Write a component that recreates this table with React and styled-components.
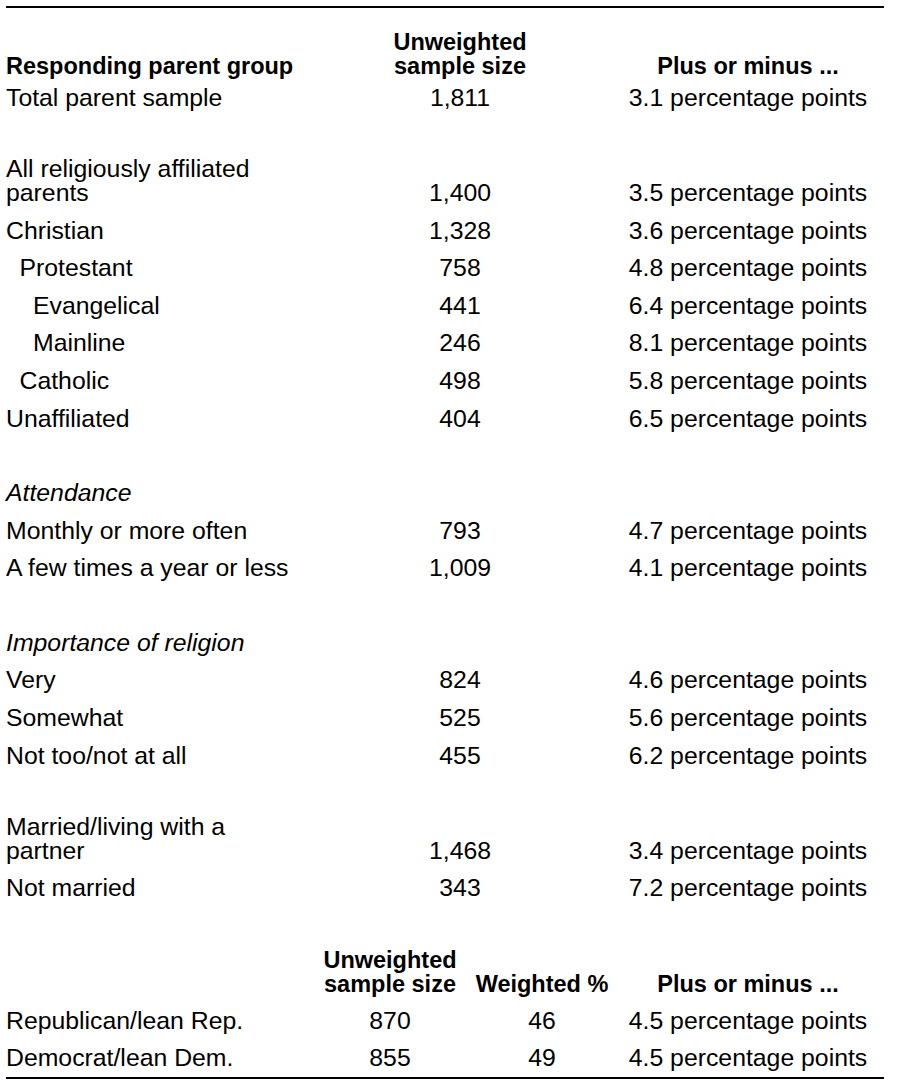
import React from 'react';
import styled, { createGlobalStyle } from 'styled-components';

const GlobalStyle = createGlobalStyle`
  body {
    margin: 0;
    background: #fff;
    color: #000;
    font-family: 'Liberation Sans', Arial, sans-serif;
  }
`;

const TOP_COLS = '384px 140px 1fr';
const BOTTOM_COLS = '314px 140px 152px 1fr';

const groups = [
  {
    gap: 0,
    rows: [{ label: 'Total parent sample', n: '1,811', moe: '3.1' }],
  },
  {
    gap: 33.4,
    rows: [
      { label: 'All religiously affiliated\nparents', n: '1,400', moe: '3.5' },
      { label: 'Christian', n: '1,328', moe: '3.6' },
      { label: 'Protestant', n: '758', moe: '4.8', indent: 1 },
      { label: 'Evangelical', n: '441', moe: '6.4', indent: 2 },
      { label: 'Mainline', n: '246', moe: '8.1', indent: 2 },
      { label: 'Catholic', n: '498', moe: '5.8', indent: 1 },
      { label: 'Unaffiliated', n: '404', moe: '6.5' },
    ],
  },
  {
    gap: 36.8,
    title: 'Attendance',
    rows: [
      { label: 'Monthly or more often', n: '793', moe: '4.7' },
      { label: 'A few times a year or less', n: '1,009', moe: '4.1' },
    ],
  },
  {
    gap: 37.2,
    title: 'Importance of religion',
    rows: [
      { label: 'Very', n: '824', moe: '4.6' },
      { label: 'Somewhat', n: '525', moe: '5.6' },
      { label: 'Not too/not at all', n: '455', moe: '6.2' },
    ],
  },
  {
    gap: 33.6,
    rows: [
      { label: 'Married/living with a\npartner', n: '1,468', moe: '3.4' },
      { label: 'Not married', n: '343', moe: '7.2' },
    ],
  },
];

const party = [
  { label: 'Republican/lean Rep.', n: '870', w: '46', moe: '4.5' },
  { label: 'Democrat/lean Dem.', n: '855', w: '49', moe: '4.5' },
];

function App() {
  return (
    <Page>
      <GlobalStyle />
      <Rule />
      <HeadRow $cols={TOP_COLS} $top={22} $bottom={1.2}>
        <HeadLabel>Responding parent group</HeadLabel>
        <HeadCell>Unweighted<br />sample size</HeadCell>
        <HeadCell $shift={82}>Plus or minus ...</HeadCell>
      </HeadRow>

      {groups.map((g, gi) => (
        <Group key={gi} $gap={g.gap}>
          {g.title && (
            <Row $cols={TOP_COLS}>
              <SectionTitle>{g.title}</SectionTitle>
            </Row>
          )}
          {g.rows.map((r) => (
            <Row key={r.label} $cols={TOP_COLS}>
              <Label $indent={r.indent || 0}>{r.label}</Label>
              <Value>{r.n}</Value>
              <Value $shift={82}>{r.moe} percentage points</Value>
            </Row>
          ))}
        </Group>
      ))}

      <HeadRow $cols={BOTTOM_COLS} $top={40.6} $bottom={6.2}>
        <span />
        <HeadCell>Unweighted<br />sample size</HeadCell>
        <HeadCell $shift={12}>Weighted %</HeadCell>
        <HeadCell>Plus or minus ...</HeadCell>
      </HeadRow>
      {party.map((r) => (
        <Row key={r.label} $cols={BOTTOM_COLS}>
          <Label $indent={0}>{r.label}</Label>
          <Value>{r.n}</Value>
          <Value $shift={12}>{r.w}</Value>
          <Value>{r.moe} percentage points</Value>
        </Row>
      ))}
      <Rule />
    </Page>
  );
}

const Page = styled.div`
  width: 878px;
  margin-left: 6px;
  padding-top: 6px;
`;

const Rule = styled.div`
  height: 2px;
  background: #000;
`;

const Row = styled.div`
  display: grid;
  grid-template-columns: ${(p) => p.$cols};
  align-items: end;
  padding: 6.8px 0;
  font-size: 24.8px;
  line-height: 24px;
`;

const HeadRow = styled(Row)`
  margin-top: ${(p) => p.$top}px;
  padding: 0 0 ${(p) => p.$bottom}px;
  font-size: 23.5px;
  font-weight: 700;
`;

const Group = styled.div`
  margin-top: ${(p) => p.$gap}px;
`;

const HeadLabel = styled.div`
  white-space: nowrap;
`;

const HeadCell = styled.div`
  text-align: center;
  white-space: nowrap;
  padding-left: ${(p) => p.$shift || 0}px;
`;

const Label = styled.div`
  white-space: pre-line;
  padding-left: ${(p) => p.$indent * 13.5}px;
`;

const SectionTitle = styled.div`
  font-style: italic;
  white-space: nowrap;
`;

const Value = styled.div`
  text-align: center;
  white-space: nowrap;
  padding-left: ${(p) => p.$shift || 0}px;
`;

export default App;
